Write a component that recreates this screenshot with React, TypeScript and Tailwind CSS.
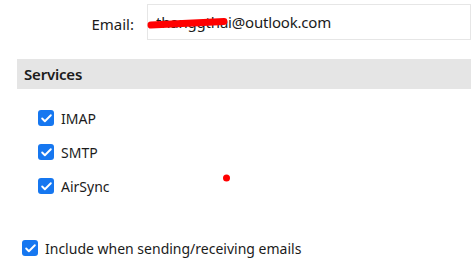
import { Check } from 'lucide-react';

function Box({ label }: { label: string }) {
  return (
    <div className="flex h-[34px] items-center gap-[7px]">
      <span className="flex h-4 w-4 items-center justify-center rounded-[3px] bg-[#1677f0]">
        <Check className="h-[13px] w-[13px] text-white" strokeWidth={3.5} />
      </span>
      <span>{label}</span>
    </div>
  );
}

export default function App() {
  return (
    <div
      className="relative h-[278px] w-[471px] overflow-hidden bg-white text-[14px] text-[#1b1b1b]"
      style={{ fontFamily: '"Noto Sans", "Open Sans", sans-serif' }}
    >
      <div className="flex items-center pt-[4px]">
        <span className="w-[134px] pt-[4px] text-right text-[15px]">Email:</span>
        <div className="ml-[13px] flex h-[36px] flex-1 items-center border border-[#e6e6e6] pl-[8px] text-[15px] tracking-[-0.2px]">
          thanggthai@outlook.com
        </div>
      </div>

      <div className="ml-[17px] mt-[19px] flex h-[30px] items-center bg-[#e5e5e5] pl-[7px] text-[15px] font-semibold tracking-[-0.2px]">
        Services
      </div>

      <div className="pl-[38px] pt-[12px]">
        <Box label="IMAP" />
        <Box label="SMTP" />
        <Box label="AirSync" />
      </div>

      <div className="mt-[28px] pl-[22px]">
        <Box label="Include when sending/receiving emails" />
      </div>

      {/* redaction marks */}
      <svg className="absolute left-0 top-0" width="471" height="278">
        <path d="M151 25 L224 21.5" stroke="#ff0000" strokeWidth="7" strokeLinecap="round" fill="none" />
        <circle cx="226.5" cy="178" r="3.5" fill="#ff0000" />
      </svg>
    </div>
  );
}
